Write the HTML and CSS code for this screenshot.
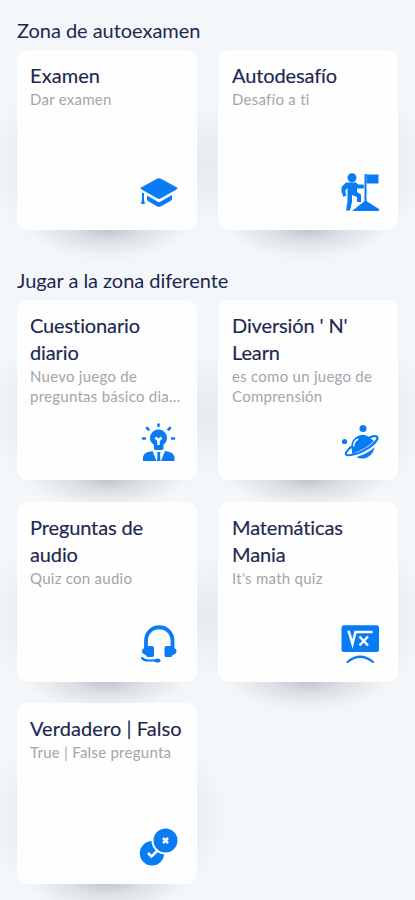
FILE: index.html
```html
<!DOCTYPE html>
<html lang="es">
<head>
<meta charset="utf-8">
<meta name="viewport" content="width=device-width">
<title>Zonas</title>
<link rel="stylesheet" href="styles.css">
</head>
<body>
<main class="page">
  <section class="zone">
    <h1 class="heading">Zona de autoexamen</h1>
    <div class="grid">
      <article class="card">
        <h2 class="wide">Examen</h2>
        <p>Dar examen</p>
        <svg class="icon" viewBox="0 0 40 40"><path d="M18.500 5.600Q20 4.800 21.500 5.600L37.500 14.200Q39.300 15.300 37.500 16.400L21.500 25.600Q20 26.400 18.500 25.600L2.500 16.400Q.7 15.300 2.500 14.200Z"/><path d="M8 22.500L18.300 28.500Q20 29.500 21.700 28.500L33 22V25.500Q33 27 31.500 28L22 33.200Q20 34.200 18 33.200L9.300 28.300Q8 27.500 8 26Z"/><path d="M3 20H5V27L6 31H2L3 27Z"/></svg>
      </article>
      <article class="card">
        <h2>Autodesafío</h2>
        <p>Desafío a ti</p>
        <svg class="icon" viewBox="0 0 40 40"><circle cx="12" cy="4.800" r="4.500"/><path d="M6 9.500H16L18 11.500H23Q24 11.500 24 13.500T23 15.500H17V19L21 21.500V29H17V24L12 22V29L10 37.500H6L7.500 28V15L5.500 17V20L6.500 22L3.500 24L1.500 19V14Z"/><path d="M24.500 1H26.500V29H24.500Z"/><path d="M26.500 1.500H38.500V10.500H26.500Z"/><path d="M12 38L25.500 27.500L39 36V38Z"/></svg>
      </article>
    </div>
  </section>
  <section class="zone">
    <h1 class="heading">Jugar a la zona diferente</h1>
    <div class="grid">
      <article class="card">
        <h2>Cuestionario diario</h2>
        <p>Nuevo juego de<br>preguntas básico dia...</p>
        <svg class="icon" viewBox="0 0 40 40"><path d="M11 15A8.500 8.500 0 0 1 28 15Q28 19 24.500 21.500V25Q24.500 27 23 27H16.500Q14.800 27 14.800 25V21.500Q11 19 11 15Z"/><path class="cut" d="M16.500 14.500L19.500 17.500V22M22.500 14.500L19.500 17.500"/><path class="ray" d="M19.500 1.500V3M8 5L9.500 6.500M31 5L29.500 6.500M4 15.500H6M33 15.500H35"/><path d="M4 38V34Q5 30 9 29L13.500 28L17.500 38Z"/><path d="M35.500 38V34Q34.500 30 30.500 29L26 28L22 38Z"/><path d="M18 29H21.500L21 31.500L21.500 38H18L18.500 31.500Z"/></svg>
      </article>
      <article class="card">
        <h2>Diversión ' N'<br>Learn</h2>
        <p>es como un juego de Comprensión</p>
        <svg class="icon" viewBox="0 0 40 40"><circle cx="23" cy="5.500" r="3.500"/><circle cx="4.500" cy="18.500" r="2.600"/><path d="M12 28Q9.500 19 15.500 14.500Q22 9.500 29 14L34 18Q26 26 12 31Z"/><path class="line" d="M29.500 14.500Q38 11.500 37.500 15.500Q34.500 22.500 22 28.500Q9 34 6 31.500Q4.800 29.500 11 24"/><path d="M16.500 34Q28 30.500 34.500 24.500Q33.500 30.500 28 34Q21.500 37 16.500 34Z"/><path class="cut thin" d="M14 23.500Q13 19 18 16"/></svg>
      </article>
      <article class="card">
        <h2>Preguntas de audio</h2>
        <p>Quiz con audio</p>
        <svg class="icon" viewBox="0 0 40 40"><path class="band" d="M7 24V15.500A13.200 13.200 0 0 1 33.500 15.500V24"/><path d="M8 21H13Q15 21 15 23V30.500Q15 32 13 32H9Q7 32 7 30Q3 29 3 26T7 23Z"/><path d="M32.500 21H27.500Q25.500 21 25.500 23V30.500Q25.500 32 27.500 32H31.500Q33.500 32 33.500 30Q37.500 29 37.500 26T33.500 23Z"/><path class="line" d="M3 33Q5 35.500 9 35.500H17"/><ellipse cx="18.500" cy="35.500" rx="3" ry="2"/></svg>
      </article>
      <article class="card">
        <h2>Matemáticas Mania</h2>
        <p>It's math quiz</p>
        <svg class="icon" viewBox="0 0 40 40"><rect x="1.500" y=".3" width="37.500" height="26.800" rx="2.500"/><path class="cut" d="M7.500 7H9L12.500 19L15.500 7H32.500M19.500 11.500L28 20.500M28 11.500L19.500 20.500"/><path class="line" d="M7.500 37Q20 26.500 33 37"/></svg>
      </article>
      <article class="card">
        <h2 class="wide">Verdadero | Falso</h2>
        <p>True | False pregunta</p>
        <svg class="icon" viewBox="0 0 40 40"><circle cx="13" cy="26.300" r="12.200"/><path class="cut" d="M9 26L12.500 29.500L18.500 23.500"/><circle class="ring" cx="26.500" cy="13.500" r="13"/><path class="cut" d="M24 11L29 16M29 11L24 16"/></svg>
      </article>
    </div>
  </section>
</main>
</body>
</html>
```
FILE: styles.css
```css
* { box-sizing: border-box; }
body {
  margin: 0;
  height: 900px;
  overflow: hidden;
  background: #f3f7fa;
  color: #1c2850;
  font-family: Lato, "Noto Sans", sans-serif;
}
.page {
  position: relative;
  z-index: 0;
  padding: 17px 17px 0;
}
.zone { margin-bottom: 36.500px; }
.heading {
  margin: 0 0 6px;
  font-size: 20px;
  line-height: 27px;
  font-weight: 400;
  letter-spacing: -.04px;
  white-space: nowrap;
}
.grid {
  display: grid;
  grid-template-columns: 180px 180px;
  grid-auto-rows: 180.300px;
  gap: 21.500px 21px;
}
.card {
  position: relative;
  display: flex;
  flex-direction: column;
  padding: 12px 13px 17px;
  border-radius: 10px;
  background: #fefefe;
}
.card:nth-child(even) { padding-left: 14px; }
.card::before {
  content: "";
  position: absolute;
  z-index: -1;
  inset: 24px -32px -30px;
  background:
    radial-gradient(ellipse 76px 28px at 50% 154px, #5a606c50, #5a606c18 50%, transparent),
    radial-gradient(ellipse 118px 100px at 50% 90px, #8c9bad20, #8c9bad14 80%, transparent);
}
h2 {
  margin: 0;
  font-size: 20px;
  line-height: 27px;
  font-weight: 400;
  letter-spacing: -.12px;
  -webkit-text-stroke: .15px;
}
.wide { letter-spacing: .08px; white-space: nowrap; }
p {
  margin: 0 -6px 0 0;
  max-width: 158px;
  color: #a3a5ab;
  font-size: 15px;
  line-height: 20.500px;
  letter-spacing: .26px;
}
.icon {
  width: 40px;
  height: 40px;
  margin: auto 5px 0 auto;
  fill: #087bf5;
  overflow: visible;
}
.line, .band, .ray {
  fill: none;
  stroke: #087bf5;
  stroke-width: 2.200;
  stroke-linecap: round;
}
.ray { stroke-width: 2.600; }
.band { stroke-width: 3.800; }
.cut {
  fill: none;
  stroke: #fff;
  stroke-width: 2.500;
}
.thin { stroke-width: 1.500; }
.ring { stroke: #fff; stroke-width: 2; }
```
